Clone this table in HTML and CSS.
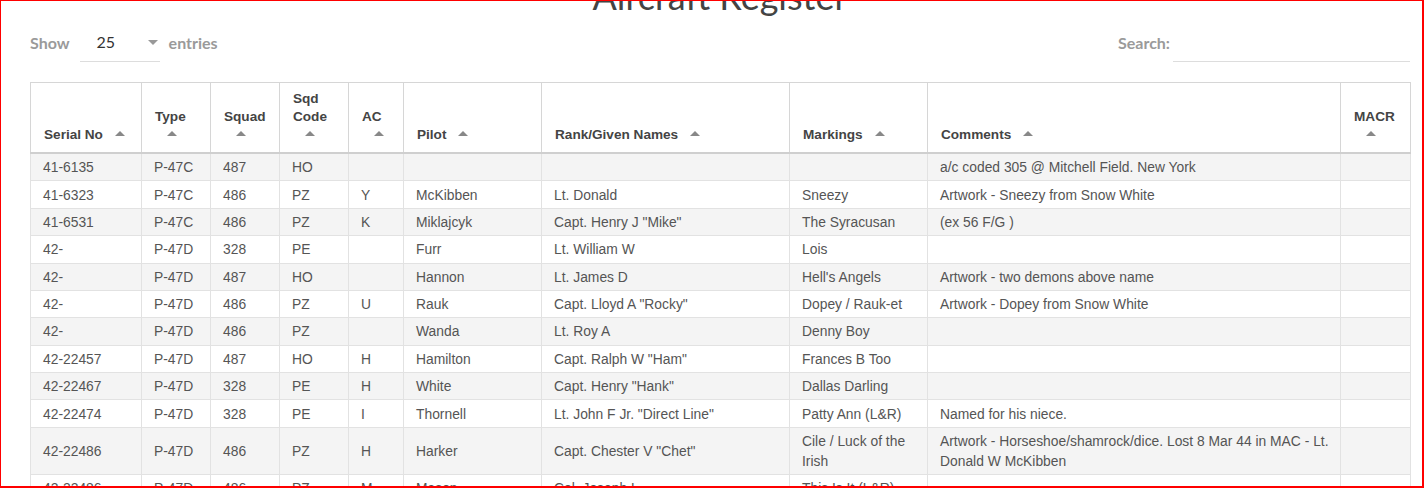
FILE: index.html
```html
<!DOCTYPE html>
<html lang="en">
<head>
<meta charset="utf-8">
<title>Aircraft Register</title>
<link rel="stylesheet" href="styles.css">
</head>
<body>
<div class="frame"></div>
<main class="page">
  <h1 class="title">Aircraft Register</h1>
  <div class="controls">
    <div class="length">
      <span class="label">Show</span>
      <div class="select"><span class="select-value">25</span><span class="caret"></span></div>
      <span class="label">entries</span>
    </div>
    <div class="search">
      <span class="label">Search:</span>
      <div class="search-input"></div>
    </div>
  </div>
  <table class="grid">
    <colgroup>
      <col class="c-serial"><col class="c-type"><col class="c-squad"><col class="c-code"><col class="c-ac"><col class="c-pilot"><col class="c-rank"><col class="c-mark"><col class="c-comm"><col class="c-macr">
    </colgroup>
    <thead>
      <tr>
        <th>Serial No<wbr><span class="sort"></span></th>
        <th>Type<wbr><span class="sort"></span></th>
        <th>Squad<wbr><span class="sort"></span></th>
        <th>Sqd Code<wbr><span class="sort"></span></th>
        <th>AC<wbr><span class="sort"></span></th>
        <th>Pilot<wbr><span class="sort"></span></th>
        <th>Rank/Given Names<wbr><span class="sort"></span></th>
        <th>Markings<wbr><span class="sort"></span></th>
        <th>Comments<wbr><span class="sort"></span></th>
        <th>MACR<wbr><span class="sort"></span></th>
      </tr>
    </thead>
    <tbody>
      <tr><td>41-6135</td><td>P-47C</td><td>487</td><td>HO</td><td></td><td></td><td></td><td></td><td>a/c coded 305 @ Mitchell Field. New York</td><td></td></tr>
      <tr><td>41-6323</td><td>P-47C</td><td>486</td><td>PZ</td><td>Y</td><td>McKibben</td><td>Lt. Donald</td><td>Sneezy</td><td>Artwork - Sneezy from Snow White</td><td></td></tr>
      <tr><td>41-6531</td><td>P-47C</td><td>486</td><td>PZ</td><td>K</td><td>Miklajcyk</td><td>Capt. Henry J "Mike"</td><td>The Syracusan</td><td>(ex 56 F/G )</td><td></td></tr>
      <tr><td>42-</td><td>P-47D</td><td>328</td><td>PE</td><td></td><td>Furr</td><td>Lt. William W</td><td>Lois</td><td></td><td></td></tr>
      <tr><td>42-</td><td>P-47D</td><td>487</td><td>HO</td><td></td><td>Hannon</td><td>Lt. James D</td><td>Hell's Angels</td><td>Artwork - two demons above name</td><td></td></tr>
      <tr><td>42-</td><td>P-47D</td><td>486</td><td>PZ</td><td>U</td><td>Rauk</td><td>Capt. Lloyd A "Rocky"</td><td>Dopey / Rauk-et</td><td>Artwork - Dopey from Snow White</td><td></td></tr>
      <tr><td>42-</td><td>P-47D</td><td>486</td><td>PZ</td><td></td><td>Wanda</td><td>Lt. Roy A</td><td>Denny Boy</td><td></td><td></td></tr>
      <tr><td>42-22457</td><td>P-47D</td><td>487</td><td>HO</td><td>H</td><td>Hamilton</td><td>Capt. Ralph W "Ham"</td><td>Frances B Too</td><td></td><td></td></tr>
      <tr><td>42-22467</td><td>P-47D</td><td>328</td><td>PE</td><td>H</td><td>White</td><td>Capt. Henry "Hank"</td><td>Dallas Darling</td><td></td><td></td></tr>
      <tr><td>42-22474</td><td>P-47D</td><td>328</td><td>PE</td><td>I</td><td>Thornell</td><td>Lt. John F Jr. "Direct Line"</td><td>Patty Ann (L&amp;R)</td><td>Named for his niece.</td><td></td></tr>
      <tr><td>42-22486</td><td>P-47D</td><td>486</td><td>PZ</td><td>H</td><td>Harker</td><td>Capt. Chester V "Chet"</td><td>Cile / Luck of the Irish</td><td>Artwork - Horseshoe/shamrock/dice. Lost 8 Mar 44 in MAC - Lt. Donald W McKibben</td><td></td></tr>
      <tr><td>42-22486</td><td>P-47D</td><td>486</td><td>PZ</td><td>M</td><td>Mason</td><td>Col. Joseph L</td><td>This Is It (L&amp;R)</td><td></td><td></td></tr>
    </tbody>
  </table>
</main>
</body>
</html>
```
FILE: styles.css
```css
html, body {
  margin: 0;
  padding: 0;
  background: #fff;
}
body {
  font-family: "Liberation Sans", Arial, sans-serif;
  overflow: hidden;
}
.frame {
  position: fixed;
  inset: 0;
  border-style: solid;
  border-color: #ff0000;
  border-width: 1px 2px 2px 1px;
  pointer-events: none;
  z-index: 10;
}
.page {
  padding: 0 14px 0 30px;
}
.title {
  font-family: Lato, "Liberation Sans", sans-serif;
  font-weight: 400;
  font-size: 36px;
  line-height: 40px;
  color: #444;
  text-align: center;
  margin: -24px 0 0 0;
}
.controls {
  display: flex;
  justify-content: space-between;
  align-items: center;
  margin-top: 6px;
  height: 40px;
}
.length, .search {
  display: flex;
  align-items: center;
  height: 40px;
}
.label {
  font-family: Lato, "Liberation Sans", sans-serif;
  font-weight: 700;
  font-size: 16px;
  color: #9a9a9a;
}
.select {
  position: relative;
  width: 80px;
  height: 40px;
  box-sizing: border-box;
  margin: 0 9px 0 10px;
  border-bottom: 1px solid #ddd;
  display: flex;
  align-items: center;
  padding-left: 17px;
}
.select-value {
  font-family: Lato, "Liberation Sans", sans-serif;
  font-size: 16px;
  color: #333;
}
.caret {
  position: absolute;
  right: 2px;
  top: 18px;
  width: 0;
  height: 0;
  border-left: 5px solid transparent;
  border-right: 5px solid transparent;
  border-top: 5px solid #999;
}
.search-input {
  width: 237px;
  height: 40px;
  box-sizing: border-box;
  margin-left: 3px;
  border-bottom: 1px solid #ddd;
}
.grid {
  margin-top: 20px;
  width: 1380px;
  table-layout: fixed;
  border-collapse: collapse;
  border: 1px solid #cfcfcf;
  font-size: 13.85px;
  color: #555;
}
.c-serial { width: 111px; }
.c-type { width: 69px; }
.c-squad { width: 69px; }
.c-code { width: 69px; }
.c-ac { width: 55px; }
.c-pilot { width: 138px; }
.c-rank { width: 248px; }
.c-mark { width: 138px; }
.c-comm { width: 413px; }
.c-macr { width: 70px; }
.grid th {
  text-align: left;
  vertical-align: bottom;
  font-weight: 700;
  font-size: 13.6px;
  line-height: 18px;
  color: #444;
  padding: 7px 8px 8px 13px;
  height: 53px;
  border: 1px solid #d6d6d6;
  border-bottom: 2px solid #cfcfcf;
}
.sort {
  display: inline-block;
  width: 0;
  height: 0;
  margin-left: 12px;
  vertical-align: 3px;
  border-left: 5px solid transparent;
  border-right: 5px solid transparent;
  border-bottom: 5px solid #888;
}
.grid td {
  vertical-align: middle;
  line-height: 20px;
  padding: 3.2px 6px 3.2px 12px;
  border: 1px solid #e2e2e2;
}
.grid tbody tr:nth-child(odd) td {
  background: #f4f4f4;
}
```
